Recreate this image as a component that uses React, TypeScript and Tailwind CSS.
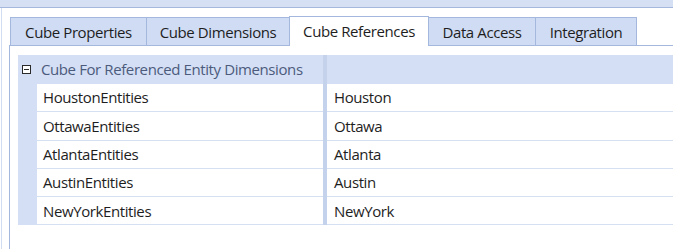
import React from 'react';

const tabs = [
  { label: 'Cube Properties', w: 'w-[137px]' },
  { label: 'Cube Dimensions', w: 'w-[144px]' },
  { label: 'Cube References', w: 'w-[140px]', active: true },
  { label: 'Data Access', w: 'w-[108px]' },
  { label: 'Integration', w: 'w-[102px]' },
];

const rows = [
  ['HoustonEntities', 'Houston'],
  ['OttawaEntities', 'Ottawa'],
  ['AtlantaEntities', 'Atlanta'],
  ['AustinEntities', 'Austin'],
  ['NewYorkEntities', 'NewYork'],
];

export default function App() {
  return (
    <div className="w-[673px] h-[249px] overflow-hidden bg-white text-[15px] text-[#1e1e1e] font-['Open_Sans',sans-serif] tracking-[-0.4px]">
      {/* window band */}
      <div className="h-[8px] bg-[#d5e0f5] border-b border-[#a4b7dd]" />

      <div className="ml-px h-[241px] border-l border-[#d3ddf1] pl-[7px]">
        {/* tab strip */}
        <div className="flex items-end h-[37px] pl-px">
          {tabs.map((t) =>
            t.active ? (
              <div
                key={t.label}
                className={`${t.w} -ml-px h-[30px] -mb-px relative z-10 bg-white border border-b-0 border-[#a4b7dd] flex items-start justify-center pt-[3px]`}
              >
                {t.label}
              </div>
            ) : (
              <div
                key={t.label}
                className={`${t.w} -ml-px first:ml-0 h-[28px] bg-[#cfdcf4] border border-b-0 border-[#a4b7dd] flex items-center justify-center pt-px`}
              >
                {t.label}
              </div>
            )
          )}
        </div>

        {/* tab panel */}
        <div className="border-l border-t border-[#a4b7dd] h-full pl-[8px] pt-[9px]">
          {/* header row */}
          <div className="flex h-[29px] bg-[#d4dff5]">
            <div className="w-[305px] flex items-center pl-[4px] text-[#4c5b7c] whitespace-nowrap">
              <span className="w-[9px] h-[9px] border border-[#2a2a2a] flex items-center justify-center mr-[10px] bg-white">
                <span className="w-[5px] h-px bg-[#2a2a2a]" />
              </span>
              Cube For Referenced Entity Dimensions
            </div>
            <div className="w-[4px] bg-[#c4d2ec]" />
            <div className="flex-1" />
          </div>

          {rows.map(([name, value]) => (
            <div key={name} className="flex h-[28.3px]">
              <div className="w-[19px] bg-[#d4dff5]" />
              <div className="w-[286px] flex items-center pl-[6px] border-b border-[#d6e0f3]">{name}</div>
              <div className="w-[4px] bg-[#c4d2ec]" />
              <div className="flex-1 flex items-center pl-[7px] border-b border-[#d6e0f3]">{value}</div>
            </div>
          ))}
        </div>
      </div>
    </div>
  );
}
